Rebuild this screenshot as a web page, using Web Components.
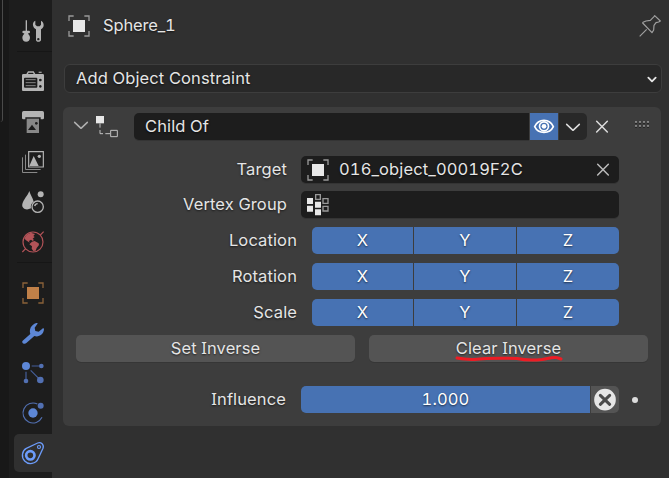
<!DOCTYPE html>
<html lang="en">
<head>
<meta charset="utf-8">
<title>Object Constraints</title>
<style>
html, body { margin: 0; height: 100%; overflow: hidden; background: #303030; }
body { font: 16.5px/27px Inter, "Noto Sans", sans-serif; font-feature-settings: "tnum"; color: #e5e5e5; letter-spacing: .12px; }
</style>
</head>
<body>
<properties-editor></properties-editor>
<script>
const ICONS = {
  tool: `<g fill="#b4b4b4"><path d="M11 1h4v32h-4z"/><rect x="1" y="32" width="23" height="8" rx="4"/><path d="M7 39h11c0 5 6 6 6 14 0 7-5 12-11.500 12S1 60 1 53c0-8 6-9 6-14z"/><path fill-rule="evenodd" d="M40 2C34 5 32 10 33 16c1 6 4 9 9 12v31c0 4 3 6 7 6s8-2 8-6V28c5-3 8-7 8-13 0-6-3-11-8-13v12l-4 5h-8l-5-5zM49 54a3.500 3.500 0 1 1 0 7 3.500 3.500 0 0 1 0-7z"/></g>`,
  render: `<path fill="#b4b4b4" fill-rule="evenodd" d="M4 9h9l5-8h17l5 8h22q4 0 4 4v44q0 3-3 3H3q-3 0-3-3V13q0-4 4-4zM20 5l-2 4h17l-2-4zM9 20q-3 0-3 3v24q0 3 3 3h34q3 0 3-3V23q0-3-3-3zM55 23a4 4 0 1 0 .1 0zM55 42a4 4 0 1 0 .1 0z"/><path d="M11 26h30M11 35h30M11 44h30" stroke="#858585" stroke-width="3"/><path d="M50 4h9" stroke="#999" stroke-width="4"/>`,
  output: `<path fill="#b4b4b4" d="M5 0h56q5 0 5 5v16q0 4-4 4h-6v-6H10v6H4q-4 0-4-4V5q0-5 5-5z"/><path fill="#888" d="M14 23h37v43H14z"/><path fill="#1d1d1d" d="M18 57l12-16 12 16z"/><circle cx="43" cy="37" r="4" fill="#1d1d1d"/>`,
  layers: `<g fill="none" stroke="#888" stroke-width="3"><path d="M1.500 19v45.500H46M10.500 11v44.500H56"/></g><path fill="none" stroke="#b4b4b4" stroke-width="3.500" d="M20 2h44v46H20z"/><path fill="#b4b4b4" d="M22 45l13-30 15 30z"/><circle cx="52" cy="16" r="5" fill="#b4b4b4"/>`,
  scene: `<path fill="#b4b4b4" d="M22 0c2 10 11 22 13 32-7 4-10 12-8 20C12 60-2 52 1 39 4 26 17 14 22 0z"/><circle cx="56" cy="10" r="9" fill="#b4b4b4"/><circle cx="47" cy="47" r="17" fill="none" stroke="#b4b4b4" stroke-width="4"/><path d="M38 45q2-7 9-7" fill="none" stroke="#b4b4b4" stroke-width="4"/>`,
  world: `<g fill="none" stroke="#b35358" stroke-width="3.500"><circle cx="33" cy="33" r="30"/><path d="M55 12l10-10M1 63l10-10"/></g><path fill="#b35358" d="M14 11L26 5l13 4-5 6 4 3-6 5 4 4-4 3-5-4-6 4 2 5-12-8-4-5zM30 32l8-2 12 7 1 5-7 9-3 8-7 1-5-7 1-7-8-6z"/>`,
  object: `<path fill="none" stroke="var(--corner,#8b6239)" stroke-width="4" d="M3 18V3h14M49 3h14v15M63 48v15H49M17 63H3V48"/><path fill="var(--core,#c08048)" d="M15 15h36v36H15z"/>`,
  modifiers: `<path fill="#5d87d6" d="M2 56l23-20c-4-13 1-27 18-33 3-1 5 1 3 3l-8 11 2 10 10 2 11-9c3-3 5-1 5 2-1 16-17 25-29 20L14 62C7 69-3 62 2 56z"/>`,
  particles: `<g stroke="#455f9b" stroke-width="3.500"><path d="M29 12h24M12 29v22M26 25l24 24"/></g><g fill="#5270b2"><circle cx="58" cy="12" r="7"/><circle cx="12" cy="57" r="7"/><circle cx="55" cy="54" r="10"/></g><circle cx="12" cy="12" r="12" fill="#5d87d6"/>`,
  physics: `<path d="M46 6A30 30 0 1 0 60 46" fill="none" stroke="#5270b2" stroke-width="3.500"/><circle cx="33" cy="33" r="14" fill="#5d87d6"/><circle cx="56" cy="11" r="9" fill="#5270b2"/>`,
  constraint: `<g fill="none" stroke="#6c9cfb"><path stroke-width="4" d="M13 19L47 3c10-4 20 5 16 16L49 49C42 67 19 69 8 57-3 45 0 26 13 19z"/><circle cx="25" cy="40" r="12.500" stroke-width="8"/><circle cx="51" cy="15" r="4.500" stroke-width="3.500"/></g>`,
  pin: `<path fill="none" stroke="#a0a0a0" stroke-width="3.500" stroke-linejoin="round" d="M2 64l21-21M12 22l9-4 13-2L45 5l2-3 17 16-5 3-8 2-6 8-1 14-5 8L11 24z"/>`,
  childof: `<path fill="#e8e8e8" d="M0 0h24v22H0z"/><path fill="none" stroke="#c2c2c2" stroke-width="3" d="M12 22v13M12 42v11h9M28 53h14M44 43h20v19H44z"/>`,
  vgroup: `<g fill="#e8e8e8"><path d="M0 12h18v18H0zM0 35h18v18H0zM24 23h18v18H24zM24 46h18v18H24z"/></g><g fill="none" stroke="#999" stroke-width="4"><path d="M26 2h14v14H26zM48 14h15v14H48zM48 37h15v14H48z"/></g>`,
  eye: `<path fill="none" stroke="#fff" stroke-width="5" d="M5 32C16 7 50 7 61 32 50 55 16 55 5 32z"/><circle cx="33" cy="31" r="13.500" fill="none" stroke="#fff" stroke-width="5"/><circle cx="33" cy="31" r="7" fill="#fff"/>`,
  down: `<path fill="none" stroke="currentColor" stroke-width="4.500" stroke-linecap="round" stroke-linejoin="round" d="M14 25l19 18 19-18"/>`,
  smalldown: `<path fill="none" stroke="currentColor" stroke-width="5.500" stroke-linecap="round" stroke-linejoin="round" d="M22 29l11 11 11-11"/>`,
  close: `<path fill="none" stroke="currentColor" stroke-width="4.500" stroke-linecap="round" d="M17 16l32 32M49 16L17 48"/>`,
  decorate: `<circle cx="33" cy="32" r="32.500" fill="#e5e5e5"/><path stroke="#4a4a4a" stroke-width="9" stroke-linecap="round" d="M19 19l28 27M47 19L19 46"/>`,
  grip: `<path fill="#101010" d="M12 25.500h6v3h-6zM24 25.500h6v3h-6zM36 25.500h6v3h-6zM48 25.500h6v3h-6zM12 37.500h6v3h-6zM24 37.500h6v3h-6zM36 37.500h6v3h-6zM48 37.500h6v3h-6z"/><path fill="#c8c8c8" d="M12 22.500h6v3h-6zM24 22.500h6v3h-6zM36 22.500h6v3h-6zM48 22.500h6v3h-6zM12 34.500h6v3h-6zM24 34.500h6v3h-6zM36 34.500h6v3h-6zM48 34.500h6v3h-6z"/>`
};

class UiIcon extends HTMLElement {
  connectedCallback() {
    this.attachShadow({mode: "open"}).innerHTML = `<style>
      :host { display: block; width: 22px; height: 22px; flex: none; }
      svg { display: block; overflow: visible; }
    </style><svg width="22" height="22" viewBox="0 0 66 66">${ICONS[this.getAttribute("name")]}</svg>`;
  }
}
customElements.define("ui-icon", UiIcon);

const define = (name, html) => customElements.define(name, class extends HTMLElement {
  constructor() { super(); this.attachShadow({mode: "open"}).innerHTML = html; }
});

define("ui-tab", `<style>
  :host { display: flex; flex: none; height: 38px; margin: 1px 0 1px 5px; padding-left: 8px; align-items: center; border-radius: 5px 0 0 5px; }
  :host([active]) { background: #303030; }
</style><slot></slot>`);

define("tab-strip", `<style>
  :host { display: flex; width: 52px; flex: none; background: #181818; }
  .edge { width: 2px; height: 122px; border-right: 1px solid #4a4a4a; border-radius: 0 0 4px 0; margin-right: 6px; }
  nav { flex: 1; display: flex; flex-direction: column; background: #1d1d1d; padding-top: 11px; }
  hr { border: 0; height: 1px; flex: none; margin: 0 0 10px 8px; background: #161616; }
</style><div class="edge"></div><nav>
  <ui-tab><ui-icon name="tool"></ui-icon></ui-tab><hr>
  <ui-tab><ui-icon name="render"></ui-icon></ui-tab>
  <ui-tab><ui-icon name="output"></ui-icon></ui-tab>
  <ui-tab><ui-icon name="layers"></ui-icon></ui-tab>
  <ui-tab><ui-icon name="scene"></ui-icon></ui-tab>
  <ui-tab><ui-icon name="world"></ui-icon></ui-tab><hr>
  <ui-tab><ui-icon name="object"></ui-icon></ui-tab>
  <ui-tab><ui-icon name="modifiers"></ui-icon></ui-tab>
  <ui-tab><ui-icon name="particles"></ui-icon></ui-tab>
  <ui-tab><ui-icon name="physics"></ui-icon></ui-tab>
  <ui-tab active><ui-icon name="constraint"></ui-icon></ui-tab>
</nav>`);

define("ui-field", `<style>
  :host { display: flex; align-items: center; height: 27px; box-sizing: border-box; background: #1d1d1d; border-radius: 5px; box-shadow: 0 1px #343434; text-shadow: 0 1px 2px #000a; --corner: #999; --core: #e8e8e8; }
</style><slot></slot>`);

define("ui-row", `<style>
  :host { display: grid; grid-template-columns: var(--label, 224px) var(--content, 318px); column-gap: var(--gap, 14px); height: 27px; }
  .label { text-align: right; text-shadow: 0 1px 2px #0009; }
</style><span class="label"><slot name="label"></slot></span><slot></slot>`);

define("axis-toggles", `<style>
  :host { display: grid; grid-template-columns: 101px 102px 102px; gap: 1px; height: 27px; border-radius: 5px; overflow: hidden; text-align: center; color: #fff; text-shadow: 0 1px 2px #0009; }
  span { background: #4772b3; }
</style><span>X</span><span>Y</span><span>Z</span>`);

define("ui-button", `<style>
  :host { display: block; height: 27px; background: #545454; border-radius: 5px; text-align: center; box-shadow: 0 1px #363636; text-shadow: 0 1px 2px #0009; }
</style><slot></slot>`);

define("constraint-panel", `<style>
  :host { display: flex; flex-direction: column; width: 598px; height: 319px; box-sizing: border-box; background: #3d3d3d; border-radius: 6px; padding: 6px 13px 0; }
  header { display: flex; align-items: center; height: 27px; margin-bottom: 16px; }
  .name { width: 395px; flex: none; padding-left: 11px; box-sizing: border-box; border-radius: 5px 0 0 5px; }
  .cell { display: flex; flex: none; align-items: center; justify-content: center; width: 28px; height: 27px; margin-left: 1px; background: #282828; }
  .eye { background: #4772b3; }
  .menu { border-radius: 0 5px 5px 0; }
  .rows { display: flex; flex-direction: column; gap: 9px; }
  .axes { --label: 221px; --content: 307px; --gap: 15px; }
  .buttons { display: grid; grid-template-columns: 279px 279px; gap: 14px; }
  .mark { position: absolute; left: 86px; top: 21px; width: 108px; height: 8px; overflow: visible; }
  .clear { position: relative; }
  .influence { display: flex; align-items: center; margin-top: 24px; --label: 210px; --content: 289px; --gap: 15px; }
  .slider { background: #4772b3; border-radius: 5px 0 0 5px; text-align: center; color: #fff; text-shadow: 0 1px 2px #0009; }
  .reset { background: #545454; border-radius: 0 5px 5px 0; }
  .dot { width: 6px; height: 6px; border-radius: 50%; background: #ddd; margin-left: 12.500px; }
  .serif { font-family: "Noto Sans", sans-serif; line-height: 0; }
</style>
<header>
  <ui-icon name="down" style="color:#b0b0b0;margin:-3px 0 0 -6px"></ui-icon>
  <ui-icon name="childof" style="margin-left:4px"></ui-icon>
  <ui-field class="name" style="margin-left:16px">Child Of</ui-field>
  <div class="cell eye"><ui-icon name="eye" style="margin-left:-1px"></ui-icon></div>
  <div class="cell menu"><ui-icon name="down" style="color:#ddd;margin-left:-1px"></ui-icon></div>
  <ui-icon name="close" style="margin-left:4px;color:#ddd"></ui-icon>
  <ui-icon name="grip" style="margin:-4px 0 0 18px"></ui-icon>
</header>
<div class="rows">
  <ui-row style="--label:211px;margin-bottom:-1px"><span slot="label">Target</span><ui-field><ui-icon name="object" style="margin:0 10px 0 6px"></ui-icon>016_object_00019F2C<ui-icon name="close" style="margin:0 5px 0 auto;color:#bbb"></ui-icon></ui-field></ui-row>
  <ui-row style="--label:211px"><span slot="label">Vertex Group</span><ui-field><ui-icon name="vgroup" style="margin-left:6px"></ui-icon></ui-field></ui-row>
  <ui-row class="axes"><span slot="label">Location</span><axis-toggles></axis-toggles></ui-row>
  <ui-row class="axes"><span slot="label">Rotation</span><axis-toggles></axis-toggles></ui-row>
  <ui-row class="axes"><span slot="label">Scale</span><axis-toggles></axis-toggles></ui-row>
  <div class="buttons"><ui-button>Set <span class="serif">I</span>nverse</ui-button><ui-button class="clear">Clear <span class="serif">I</span>nverse<svg class="mark" viewBox="0 0 108 8"><path d="M2 2c4 1 10 1 17 1.500C32 2 48 2 62 2.500c9 2 15 2 25 1 6-1 13-3 16-1.500l3 1" fill="none" stroke="#ed1c24" stroke-width="3" stroke-linecap="round"/></svg></ui-button></div>
</div>
<div class="influence">
  <ui-row><span slot="label"><span class="serif">I</span>nfluence</span><div class="slider">1.000</div></ui-row>
  <div class="cell reset"><ui-icon name="decorate"></ui-icon></div><i class="dot"></i>
</div>`);

define("properties-editor", `<style>
  :host { display: flex; width: 669px; height: 478px; background: #303030; }
  main { flex: 1; padding: 12px 7px 0 11px; }
  .crumb { display: flex; align-items: center; height: 27px; padding: 0 1px 0 5px; text-shadow: 0 1px 2px #0009; --corner: #999; --core: #e8e8e8; }
  .crumb span { flex: 1; margin-left: 13px; letter-spacing: -.15px; }
  .add { display: flex; align-items: center; justify-content: space-between; width: 598px; height: 29px; box-sizing: border-box; margin: 25px 0 14px 1px; padding: 0 0 0 11px; border: 1px solid #3d3d3d; border-radius: 6px; background: #282828; text-shadow: 0 1px 2px #000a; }
</style>
<tab-strip></tab-strip>
<main>
  <div class="crumb"><ui-icon name="object"></ui-icon><span>Sphere_1</span><ui-icon name="pin"></ui-icon></div>
  <div class="add">Add Object Constraint<ui-icon name="smalldown" style="margin-right:-2px"></ui-icon></div>
  <constraint-panel></constraint-panel>
</main>`);
</script>
</body>
</html>
